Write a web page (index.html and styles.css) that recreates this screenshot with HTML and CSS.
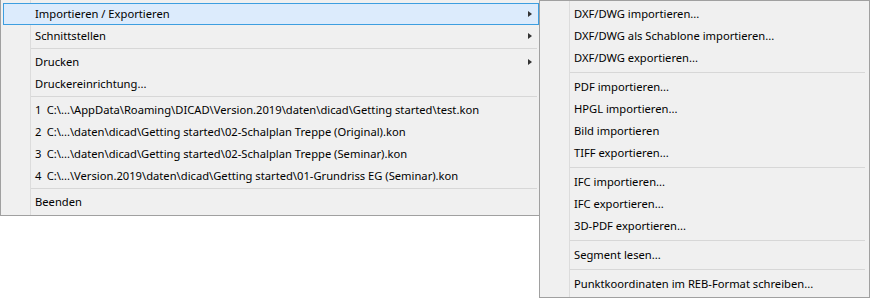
FILE: index.html
```html
<html>
<head>
<meta charset="UTF-8">
<link rel="stylesheet" href="styles.css">
</head>
<body>
<div id="hauptmenue" class="menue">
<div class="eintrag aktiv">Importieren / Exportieren<span class="pfeil"></span></div>
<div class="eintrag">Schnittstellen<span class="pfeil"></span></div>
<div class="trenner"></div>
<div class="eintrag">Drucken<span class="pfeil"></span></div>
<div class="eintrag">Druckereinrichtung...</div>
<div class="trenner"></div>
<div class="eintrag"><span class="nr">1</span>C:\...\AppData\Roaming\DICAD\Version.2019\daten\dicad\Getting started\test.kon</div>
<div class="eintrag"><span class="nr">2</span>C:\...\daten\dicad\Getting started\02-Schalplan Treppe (Original).kon</div>
<div class="eintrag"><span class="nr">3</span>C:\...\daten\dicad\Getting started\02-Schalplan Treppe (Seminar).kon</div>
<div class="eintrag"><span class="nr">4</span>C:\...\Version.2019\daten\dicad\Getting started\01-Grundriss EG (Seminar).kon</div>
<div class="trenner"></div>
<div class="eintrag">Beenden</div>
</div>
<div id="untermenue" class="menue">
<div class="eintrag">DXF/DWG importieren...</div>
<div class="eintrag">DXF/DWG als Schablone importieren...</div>
<div class="eintrag">DXF/DWG exportieren...</div>
<div class="trenner"></div>
<div class="eintrag">PDF importieren...</div>
<div class="eintrag">HPGL importieren...</div>
<div class="eintrag">Bild importieren</div>
<div class="eintrag">TIFF exportieren...</div>
<div class="trenner"></div>
<div class="eintrag">IFC importieren...</div>
<div class="eintrag">IFC exportieren...</div>
<div class="eintrag">3D-PDF exportieren...</div>
<div class="trenner"></div>
<div class="eintrag">Segment lesen...</div>
<div class="trenner"></div>
<div class="eintrag">Punktkoordinaten im REB-Format schreiben...</div>
</div>
</body>
</html>
```

FILE: styles.css
```css
*{
margin:0;
padding:0;
box-sizing:border-box;
}
body{
background:#fff;
font-family:"Segoe UI","Noto Sans",sans-serif;
font-size:11.2px;
color:#000;
position:relative;
width:870px;
height:298px;
overflow:hidden;
}
.menue{
background:#f0f0f0 linear-gradient(#dcdcdc,#dcdcdc) no-repeat 29px 0/1px 100%;
border:1px solid #a0a0a0;
padding:2px;
}
#hauptmenue{
width:542px;
border-top:none;
padding-top:3px;
}
#untermenue{
position:absolute;
left:539px;
top:0;
width:331px;
height:298px;
}
.eintrag{
height:22px;
line-height:19px;
padding-left:31px;
position:relative;
white-space:nowrap;
border:1px solid transparent;
}
.aktiv{
background:#dcebfc;
border-color:#3d9ee0;
}
.pfeil{
position:absolute;
right:6px;
top:6.5px;
border-left:4px solid #333;
border-top:3.5px solid transparent;
border-bottom:3.5px solid transparent;
}
.trenner{
height:4px;
padding-top:1px;
margin-left:28px;
margin-right:2px;
}
.trenner:before{
content:"";
display:block;
height:1px;
background:#d7d7d7;
}
#untermenue .trenner{
height:7px;
padding-top:3px;
}
.nr{
display:inline-block;
width:11.7px;
}
```
